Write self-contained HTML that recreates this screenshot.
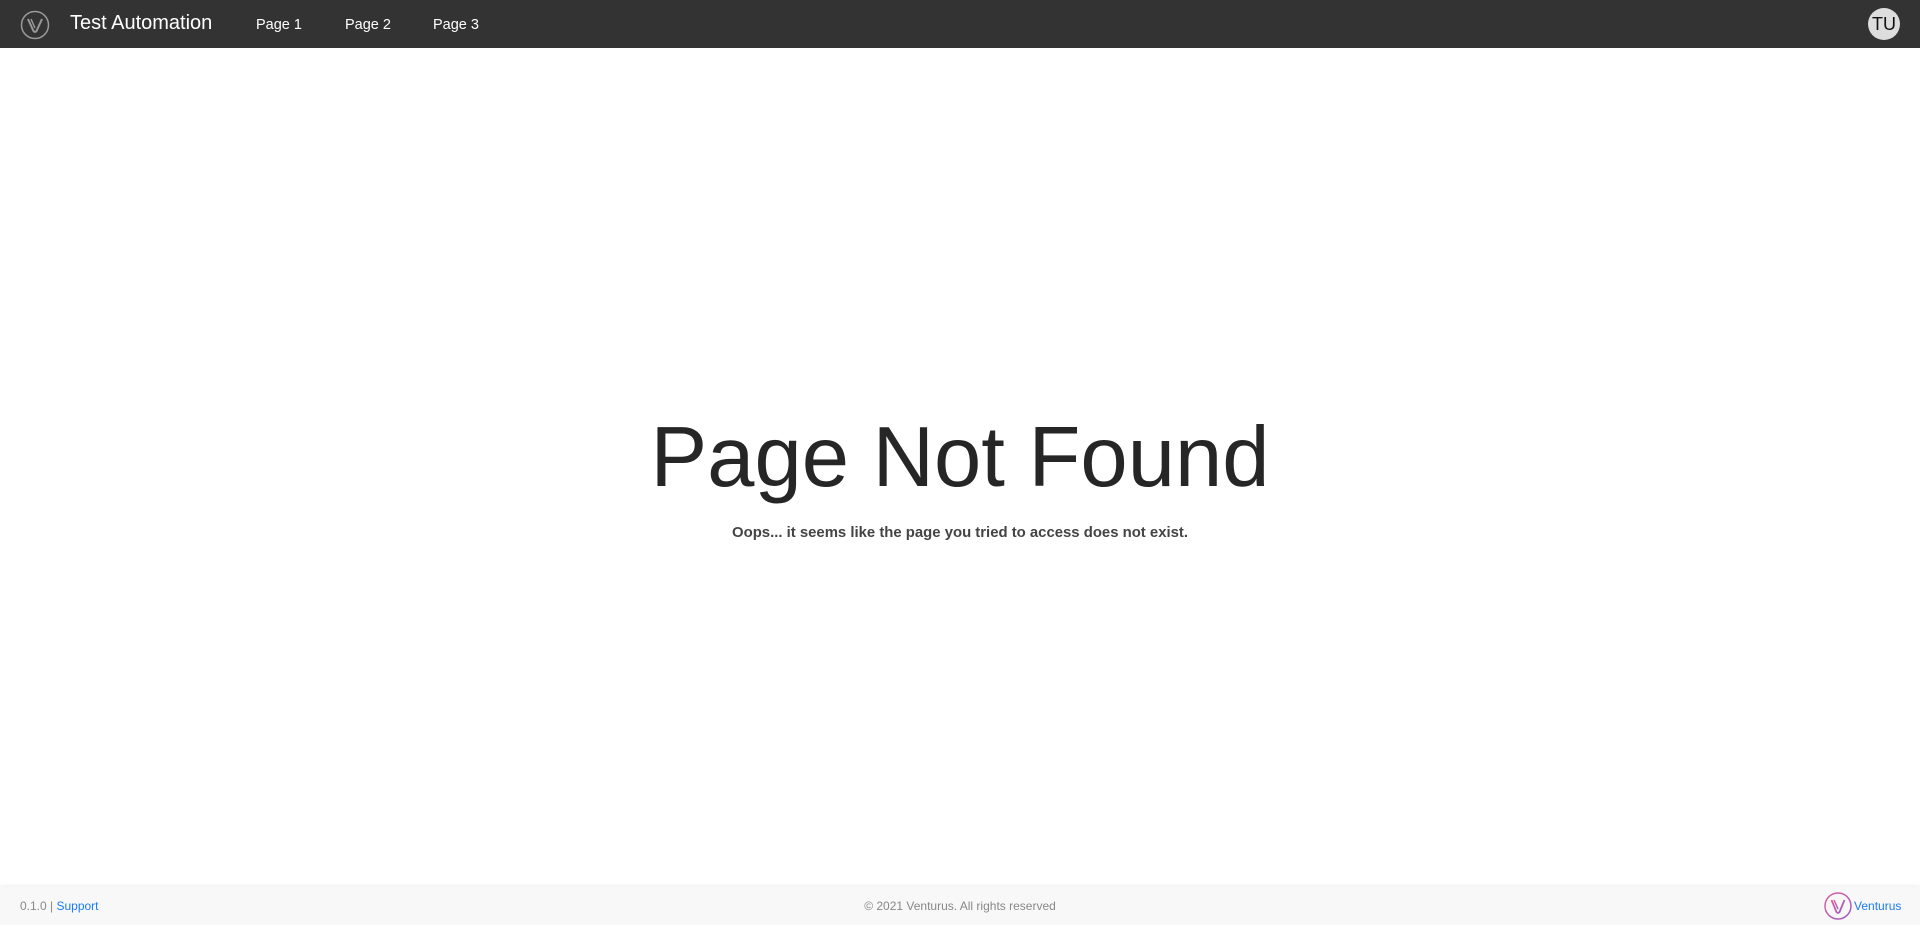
<!DOCTYPE html>
<html><head><meta charset="utf-8"><style>
*{margin:0;padding:0;box-sizing:border-box}
body{width:1920px;height:925px;overflow:hidden;background:#fff;font-family:"Liberation Sans",Arial,sans-serif;position:relative}
.hdr{position:absolute;left:0;top:0;width:1920px;height:48px;background:#333}
.hdr .t{position:absolute;left:70px;top:12px;color:#fff;font-size:20px}
.hdr .p{position:absolute;top:17px;color:#fff;font-size:14.5px}
.av{position:absolute;left:1868px;top:8px;width:32px;height:32px;border-radius:50%;background:#ddd;color:#111;font-size:18px;text-align:center;line-height:32px}
h1{position:absolute;left:0;width:1920px;top:408px;text-align:center;font-weight:normal;font-size:85px;color:#262626;line-height:100px}
.sub{position:absolute;left:0;width:1920px;top:525px;text-align:center;font-weight:bold;font-size:14.9px;color:#444}
.ftr{position:absolute;left:0;top:887px;width:1920px;height:38px;background:#f8f8f8;box-shadow:0 -1px 4px rgba(0,0,0,.08);font-size:12px;color:#888}
.ftr a{color:#1a7cf5;text-decoration:none}
</style></head><body>
<div class="hdr">
<svg style="position:absolute;left:20px;top:10px" width="30" height="30" viewBox="0 0 30 30"><circle cx="15" cy="15" r="13.5" fill="none" stroke="#999" stroke-width="1.5"/><path d="M8 9 L13.5 21 Q15 23 16.5 21 L22 9" fill="none" stroke="#999" stroke-width="2"/><path d="M11 9 L15 18" stroke="#999" stroke-width="1.5"/></svg>
<div class="t">Test Automation</div>
<div class="p" style="left:256px">Page 1</div>
<div class="p" style="left:345px">Page 2</div>
<div class="p" style="left:433px">Page 3</div>
<div class="av">TU</div>
</div>
<h1>Page Not Found</h1>
<div class="sub">Oops... it seems like the page you tried to access does not exist.</div>
<div class="ftr">
<div style="position:absolute;left:20px;top:12px">0.1.0 | <a>Support</a></div>
<div style="position:absolute;left:0;width:1920px;text-align:center;top:12px">© 2021 Venturus. All rights reserved</div>
<svg style="position:absolute;left:1823px;top:4px" width="30" height="30" viewBox="0 0 30 30"><defs><linearGradient id="g" x1="0" y1="0" x2="1" y2="1"><stop offset="0" stop-color="#e0609a"/><stop offset="1" stop-color="#9a5cc8"/></linearGradient></defs><circle cx="15" cy="15" r="13" fill="none" stroke="url(#g)" stroke-width="1.5"/><path d="M8.5 9 L13.5 21 Q15 23 16.5 21 L21.5 9" fill="none" stroke="url(#g)" stroke-width="1.8"/><path d="M11 9 L15 18" stroke="url(#g)" stroke-width="1.5"/></svg>
<div style="position:absolute;left:1854px;top:12px"><a>Venturus</a></div>
</div>
</body></html>
